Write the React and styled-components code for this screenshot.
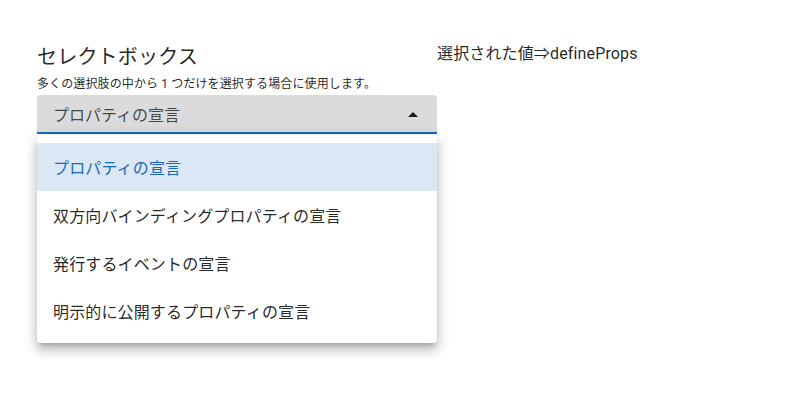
import React from "react";
import styled, { createGlobalStyle } from "styled-components";

const Global = createGlobalStyle`
  html, body { margin: 0; padding: 0; background: #fff; min-height: 100%; }
  body {
    font-family: Roboto, "Noto Sans CJK JP", sans-serif;
    color: rgba(0, 0, 0, 0.87);
    -webkit-font-smoothing: antialiased;
  }
`;

const Page = styled.div`
  display: flex;
  align-items: flex-start;
  padding: 41px 0 40px 37px;
`;

const LeftCol = styled.div`
  width: 400px;
  display: flex;
  flex-direction: column;
`;

const RightCol = styled.div`
  font-size: 16px;
  line-height: 24px;
  letter-spacing: 0.009em;
  padding-top: 1px;
`;

const Title = styled.h2`
  margin: 0;
  font-size: 20px;
  line-height: 32px;
  font-weight: 400;
  letter-spacing: 0.01em;
`;

const Description = styled.p`
  margin: 1px 0 1px;
  font-size: 12px;
  line-height: 20px;
  letter-spacing: 0.01em;
`;

const SelectWrap = styled.div`
  display: flex;
  flex-direction: column;
`;

const Field = styled.div`
  height: 39px;
  box-sizing: border-box;
  background: #dbdbdb;
  border-radius: 4px 4px 0 0;
  border-bottom: 2px solid #1867c0;
  display: flex;
  align-items: center;
  justify-content: space-between;
  padding: 0 12px 0 16px;
  font-size: 16px;
  color: rgba(0, 0, 0, 0.7);
`;

const Arrow = styled.svg`
  width: 24px;
  height: 24px;
  fill: rgba(0, 0, 0, 0.87);
`;

const Menu = styled.ul`
  margin: 1px 0 0;
  padding: 8px 0;
  list-style: none;
  background: #fff;
  border-radius: 4px;
  box-shadow: 0 5px 5px -3px rgba(0, 0, 0, 0.2), 0 8px 10px 1px rgba(0, 0, 0, 0.14),
    0 3px 14px 2px rgba(0, 0, 0, 0.12);
`;

const Item = styled.li`
  height: 48px;
  display: flex;
  align-items: center;
  padding: 0 16px;
  font-size: 16px;
  letter-spacing: 0.009em;
  background: ${(p) => (p.$active ? "#dce7f5" : "transparent")};
  color: ${(p) => (p.$active ? "#1867c0" : "rgba(0, 0, 0, 0.87)")};
`;

const options = [
  "プロパティの宣言",
  "双方向バインディングプロパティの宣言",
  "発行するイベントの宣言",
  "明示的に公開するプロパティの宣言",
];

export default function App() {
  return (
    <>
      <Global />
      <Page>
        <LeftCol>
          <Title>セレクトボックス</Title>
          <Description>多くの選択肢の中から 1 つだけを選択する場合に使用します。</Description>
          <SelectWrap>
            <Field>
              <span>{options[0]}</span>
              <Arrow viewBox="0 0 24 24">
                <path d="M7,15L12,10L17,15H7Z" />
              </Arrow>
            </Field>
            <Menu>
              {options.map((o, i) => (
                <Item key={o} $active={i === 0}>
                  {o}
                </Item>
              ))}
            </Menu>
          </SelectWrap>
        </LeftCol>
        <RightCol>選択された値⇒defineProps</RightCol>
      </Page>
    </>
  );
}
